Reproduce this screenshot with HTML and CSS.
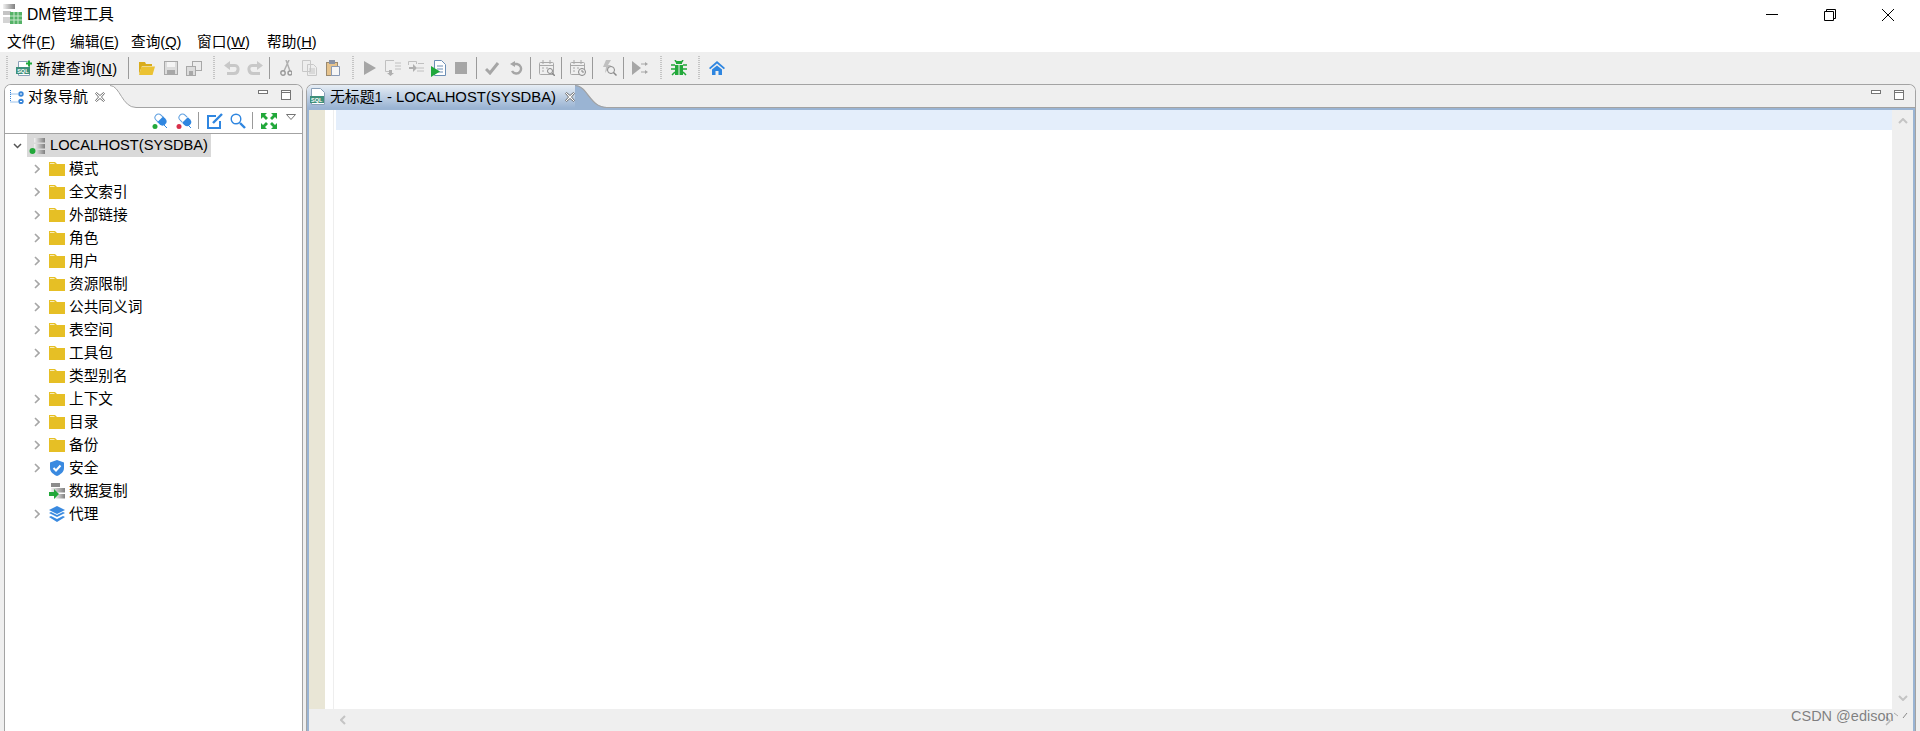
FILE: index.html
```html
<!DOCTYPE html>
<html lang="zh">
<head>
<meta charset="utf-8">
<title>DM管理工具</title>
<link rel="stylesheet" href="styles.css">
</head>
<body>
<svg class="defs" width="0" height="0">
  <defs>
    <linearGradient id="bar"><stop offset="0" stop-color="#f2f2f2"/><stop offset="1" stop-color="#808080"/></linearGradient>
    <symbol id="folder" viewBox="0 0 16 14"><path fill="#e6bf25" d="M0 0h6l2 2h8v12H0z"/><path fill="none" stroke="#f7ecb8" d="M1 1.500h4.500"/></symbol>
    <symbol id="chev" viewBox="0 0 6 10"><path fill="none" stroke="#a6a6a6" stroke-width="1.6" d="M1 1l4 4-4 4"/></symbol>
    <symbol id="grip" viewBox="0 0 2 24"><path stroke="#c4c4c4" stroke-width="2" stroke-dasharray="1 1" d="M1 0v24"/></symbol>
    <symbol id="closex" viewBox="0 0 10 10"><path fill="#fff" stroke="#6e6e6e" d="M1.500.5L5 3.500 8.500.5l1 1L6.500 5l3 3.500-1 1L5 6.500l-3.500 3-1-1L3.500 5 .5 1.500z"/></symbol>
    <symbol id="vmin" viewBox="0 0 10 4"><rect x=".5" y=".5" width="9" height="3" fill="#fff" stroke="#757575"/></symbol>
    <symbol id="vmax" viewBox="0 0 10 10"><rect x=".5" y=".5" width="9" height="9" fill="#fff" stroke="#757575"/><path stroke="#757575" d="M1 2.500h8"/></symbol>
  </defs>
</svg>
<div class="app">
  <header class="titlebar">
    <svg class="appicon" width="19" height="20" viewBox="0 0 19 20"><rect x="0" y="0" width="12" height="5" fill="url(#bar)"/><rect x="0" y="7" width="8" height="4" fill="#c4c4c4"/><rect x="0" y="13" width="7" height="6" fill="#d4d4d4"/><rect x="7" y="8" width="12" height="12" fill="#55b267"/><path stroke="#c8e8cc" d="M7 12h12M7 16h12M11 8v12M15 8v12"/></svg>
    <span class="apptitle">DM管理工具</span>
    <div class="winctl">
      <svg width="14" height="14" viewBox="0 0 14 14"><path stroke="#000" d="M1 6.500h12"/></svg>
      <svg width="14" height="14" viewBox="0 0 14 14"><path fill="none" stroke="#000" d="M1.500 3.500h9v9h-9zM3.500 3.500v-2h9v9h-2"/></svg>
      <svg width="14" height="14" viewBox="0 0 14 14"><path stroke="#000" d="M1 1l12 12M13 1L1 13"/></svg>
    </div>
  </header>
  <nav class="menubar">
    <span class="menu">文件(<u>F</u>)</span><span class="menu">编辑(<u>E</u>)</span><span class="menu">查询(<u>Q</u>)</span><span class="menu">窗口(<u>W</u>)</span><span class="menu">帮助(<u>H</u>)</span>
  </nav>
  <div class="toolbar">
    <svg class="grip" width="2" height="24"><use href="#grip"/></svg>
    <div class="newq">
      <svg width="17" height="16" viewBox="0 0 17 16"><path fill="#fff" stroke="#8aa0b8" d="M2.500 1.500h9l2 2v12h-11z"/><rect x="0" y="7" width="14" height="7" fill="#3e8f7a"/><text x="1.200" y="13" class="sqltxt">SQL</text><path stroke="#1fa83c" stroke-width="2" d="M10 3.500h6M13 .5v6"/></svg>
      <span class="newq-text">新建查询(<u>N</u>)</span>
    </div>
    <i class="sep first"></i>
    <div class="cell"><svg width="16" height="14" viewBox="0 0 16 14"><path fill="#d9ac1c" d="M0 1h6l1 2h6v2H3L0 13z"/><path fill="#ebc233" d="M2.500 5.500H16L13.500 14H0z"/></svg></div>
    <div class="cell"><svg width="14" height="14" viewBox="0 0 14 14"><rect x=".5" y=".5" width="13" height="13" fill="#dcdcdc" stroke="#a8a8a8"/><rect x="3" y="1" width="8" height="5" fill="#f4f4f4"/><rect x="3" y="9" width="8" height="4" fill="#a8a8a8"/></svg></div>
    <div class="cell"><svg width="16" height="15" viewBox="0 0 16 15"><rect x="6.500" y=".5" width="9" height="9" fill="#ececec" stroke="#a8a8a8"/><rect x=".5" y="5.500" width="9" height="9" fill="#dcdcdc" stroke="#a8a8a8"/><rect x="3" y="10" width="4" height="4" fill="#a8a8a8"/></svg></div>
    <svg class="grip g2" width="2" height="24"><use href="#grip"/></svg>
    <div class="cell"><svg width="16" height="14" viewBox="0 0 16 14"><path fill="none" stroke="#c8c8c8" stroke-width="3" d="M4 4.500h7c4.500 0 4 8-1 8H3"/><path fill="#c8c8c8" d="M0 4.500L6 0v9z"/></svg></div>
    <div class="cell"><svg width="16" height="14" viewBox="0 0 16 14"><path fill="none" stroke="#c8c8c8" stroke-width="3" d="M12 4.500H5c-4.500 0-4 8 1 8h7"/><path fill="#c8c8c8" d="M16 4.500L10 0v9z"/></svg></div>
    <i class="sep tight"></i>
    <div class="cell"><svg width="12" height="16" viewBox="0 0 12 16"><path stroke="#b0b0b0" stroke-width="1.500" d="M9 0L4 11M6 0l4 11"/><circle cx="3" cy="13" r="2.200" fill="none" stroke="#999" stroke-width="1.400"/><circle cx="10" cy="13" r="2" fill="none" stroke="#999" stroke-width="1.400"/></svg></div>
    <div class="cell"><svg width="15" height="16" viewBox="0 0 15 16"><path fill="#eee" stroke="#c8c8c8" d="M.5.5h8v11h-8zM5.500 4.500h6l3 3v8h-9z"/><path stroke="#c4c4c4" d="M7 9h6M7 11h6M7 13h6"/></svg></div>
    <div class="cell"><svg width="14" height="16" viewBox="0 0 14 16"><rect x=".5" y="2.500" width="11" height="13" fill="#e6c38d" stroke="#9a8a70"/><rect x="3" y="0" width="6" height="4" fill="#8a93a5"/><path fill="#f6f6f6" stroke="#8a9ab5" d="M5.500 6.500h8v9h-8z"/></svg></div>
    <svg class="grip g2" width="2" height="24"><use href="#grip"/></svg>
    <div class="cell n"><svg width="12" height="14" viewBox="0 0 12 14"><path fill="#a6a6a6" d="M0 0l12 7L0 14z"/></svg></div>
    <div class="cell n"><svg width="16" height="16" viewBox="0 0 16 16"><path fill="none" stroke="#c0c0c0" d="M5 .5H.5v11H5M5 .5h4M10 3h6M10 6h6M10 9h6"/><path fill="#b0b0b0" d="M4 10h3v3h2l-3.500 3L2 13h2z"/></svg></div>
    <div class="cell n"><svg width="16" height="14" viewBox="0 0 16 14"><path fill="none" stroke="#c0c0c0" d="M.5 4V.5h8V3M9 7h7M9 10h7M10 2.500h6"/><path fill="#b0b0b0" d="M1 6h4V3l4 4-4 4V8H1z"/></svg></div>
    <div class="cell n"><svg width="15" height="17" viewBox="0 0 15 17"><path fill="#fff" stroke="#6c8fb5" d="M3.500.5h7l4 4v11h-11z"/><path stroke="#6c8fb5" d="M6 6h6M6 9h6M6 12h6"/><path fill="#1fa83c" d="M0 6l9 5.500L0 17z"/></svg></div>
    <div class="cell n"><svg width="12" height="12" viewBox="0 0 12 12"><rect width="12" height="12" fill="#a6a6a6"/></svg></div>
    <i class="sep wide"></i>
    <div class="cell"><svg width="15" height="13" viewBox="0 0 15 13"><path fill="none" stroke="#a6a6a6" stroke-width="3" d="M1 7l4 4 8-10"/></svg></div>
    <div class="cell"><svg width="14" height="14" viewBox="0 0 14 14"><path fill="none" stroke="#a6a6a6" stroke-width="2.400" d="M4 3h4a4.800 4.800 0 1 1-5 7"/><path fill="#a6a6a6" d="M6 0v6L1 3z"/></svg></div>
    <i class="sep tight"></i>
    <div class="cell"><svg width="16" height="16" viewBox="0 0 16 16"><rect x=".5" y="2.500" width="14" height="12" rx="1" fill="none" stroke="#a8a8a8"/><path stroke="#a8a8a8" d="M1 5.500h13M4 0v4M11 0v4M3 8h2M7 8h2M3 11h2"/><circle cx="11" cy="11" r="2.500" fill="#efefef" stroke="#888"/><path stroke="#888" stroke-width="1.500" d="M13 13l3 3"/></svg></div>
    <i class="sep tight"></i>
    <div class="cell"><svg width="16" height="16" viewBox="0 0 16 16"><rect x=".5" y="2.500" width="14" height="12" rx="1" fill="none" stroke="#a8a8a8"/><path stroke="#a8a8a8" d="M1 5.500h13M4 0v4M11 0v4M3 8h2M7 8h2M3 11h2"/><circle cx="12" cy="12" r="3.500" fill="#efefef" stroke="#888"/><path fill="none" stroke="#888" d="M12 10v2h2"/></svg></div>
    <i class="sep tight"></i>
    <div class="cell"><svg width="16" height="16" viewBox="0 0 16 16"><path fill="#c0c0c0" d="M5 0h5L7 5h3l-6 8 1-6H2z"/><circle cx="10" cy="10" r="3.500" fill="#efefef" stroke="#888"/><path stroke="#888" stroke-width="1.500" d="M12.500 12.500l3 3"/></svg></div>
    <i class="sep tight"></i>
    <div class="cell"><svg width="16" height="14" viewBox="0 0 16 14"><path fill="#a6a6a6" d="M0 0l9 7-9 7z"/><path stroke="#a6a6a6" d="M9 3h5M9 11h5"/><path fill="#a6a6a6" d="M13 1l3 2-3 2zM13 9l3 2-3 2z"/></svg></div>
    <svg class="grip g3" width="2" height="24"><use href="#grip"/></svg>
    <div class="cell"><svg width="16" height="16" viewBox="0 0 16 16"><path fill="#22a83a" d="M5 1h6v3H5zM4 5h8v10H4z"/><path stroke="#22a83a" stroke-width="1.500" d="M4 0l2 3M12 0l-2 3M0 5h4M16 5h-4M0 9h4M16 9h-4M1 15l3-3M15 15l-3-3"/><path stroke="#efefef" d="M8 5v10"/></svg></div>
    <svg class="grip g3" width="2" height="24"><use href="#grip"/></svg>
    <div class="cell"><svg width="16" height="14" viewBox="0 0 16 14"><path fill="#2f86e0" d="M8 0l8 7-1.200 1.200L8 2.500 1.200 8.200 0 7zM3 8.500l5-4 5 4V14H9.500v-4h-3v4H3z"/></svg></div>
  </div>
  <main class="workbench">
    <section class="panel nav">
      <div class="tabrow">
        <div class="tab navtab">
          <svg width="14" height="14" viewBox="0 0 14 14"><path fill="none" stroke="#3a86d8" stroke-dasharray="1 1" d="M.5 0v12h8M.5 4h8"/><circle cx="11" cy="4" r="2.700" fill="#3a86d8"/><circle cx="11" cy="11.500" r="2.700" fill="#3a86d8"/><path stroke="#fff" d="M10 4h2M10 11.500h2"/></svg>
          <span>对象导航</span>
          <svg class="x" width="10" height="10"><use href="#closex"/></svg>
        </div>
        <svg class="curve" width="26" height="23" viewBox="0 0 26 23"><path fill="#fff" d="M0 0c10 0 12 22 26 22v1H0z"/><path fill="none" stroke="#a3a3a3" d="M0 .5c10 0 12 22 26 22"/></svg>
        <div class="tabfill">
          <svg width="10" height="4"><use href="#vmin"/></svg>
          <svg width="10" height="10"><use href="#vmax"/></svg>
        </div>
      </div>
      <div class="navtools">
        <svg width="16" height="16" viewBox="0 0 16 16"><g transform="rotate(-45 9 7)"><path fill="#fff" stroke="#5c9ee0" d="M5.500 6.500V3.500a3.500 3.500 0 0 1 7 0v3"/><path fill="#2f86e0" d="M5 6h8v3a4 4 0 0 1-8 0z"/></g><path stroke="#2f86e0" d="M12 12l3 3"/><circle cx="3" cy="13.500" r="2.500" fill="#22a83a"/></svg>
        <svg width="16" height="16" viewBox="0 0 16 16"><g transform="rotate(-45 9 7)"><path fill="#fff" stroke="#5c9ee0" d="M5.500 6.500V3.500a3.500 3.500 0 0 1 7 0v3"/><path fill="#2f86e0" d="M5 7h8v3a4 4 0 0 1-8 0z"/></g><path stroke="#2f86e0" d="M12 12l3 3"/><circle cx="3" cy="13.500" r="2.500" fill="#d8304a"/></svg>
        <i class="sep navsep"></i>
        <svg width="16" height="16" viewBox="0 0 16 16"><path fill="none" stroke="#2f86e0" stroke-width="2" d="M9 3H1v12h12V8"/><path stroke="#2f86e0" stroke-width="2.400" d="M6 10l9-9"/></svg>
        <svg class="t2" width="16" height="16" viewBox="0 0 16 16"><circle cx="6" cy="6" r="4.800" fill="none" stroke="#2f86e0" stroke-width="1.400"/><path stroke="#2f86e0" stroke-width="2.400" d="M10 10l5 5"/></svg>
        <i class="sep navsep"></i>
        <svg width="16" height="16" viewBox="0 0 16 16"><path fill="#22a83a" d="M0 0h6L4 2l3 3-2 2-3-3-2 2zM16 0v6l-2-2-3 3-2-2 3-3-2-2zM0 16v-6l2 2 3-3 2 2-3 3 2 2zM16 16h-6l2-2-3-3 2-2 3 3 2-2z"/></svg>
        <svg class="viewmenu" width="10" height="6" viewBox="0 0 10 6"><path fill="#fff" stroke="#757575" d="M.5.500h9L5 5.500z"/></svg>
      </div>
      <div class="tree">
        <div class="row root">
          <svg class="chev-root" width="9" height="6" viewBox="0 0 9 6"><path fill="none" stroke="#555" stroke-width="1.500" d="M1 1l3.500 3.500L8 1"/></svg>
          <div class="sel">
            <svg width="16" height="16" viewBox="0 0 16 16"><rect x="5" y="0" width="11" height="4.500" fill="url(#bar)"/><rect x="5" y="6" width="11" height="4.500" fill="url(#bar)"/><rect x="5" y="12" width="11" height="4.500" fill="url(#bar)"/><circle cx="3.500" cy="13" r="3" fill="#22a83a"/></svg>
            <span>LOCALHOST(SYSDBA)</span>
          </div>
        </div>
        <div class="row"><svg class="chev"><use href="#chev"/></svg><svg class="ico"><use href="#folder"/></svg><span>模式</span></div>
        <div class="row"><svg class="chev"><use href="#chev"/></svg><svg class="ico"><use href="#folder"/></svg><span>全文索引</span></div>
        <div class="row"><svg class="chev"><use href="#chev"/></svg><svg class="ico"><use href="#folder"/></svg><span>外部链接</span></div>
        <div class="row"><svg class="chev"><use href="#chev"/></svg><svg class="ico"><use href="#folder"/></svg><span>角色</span></div>
        <div class="row"><svg class="chev"><use href="#chev"/></svg><svg class="ico"><use href="#folder"/></svg><span>用户</span></div>
        <div class="row"><svg class="chev"><use href="#chev"/></svg><svg class="ico"><use href="#folder"/></svg><span>资源限制</span></div>
        <div class="row"><svg class="chev"><use href="#chev"/></svg><svg class="ico"><use href="#folder"/></svg><span>公共同义词</span></div>
        <div class="row"><svg class="chev"><use href="#chev"/></svg><svg class="ico"><use href="#folder"/></svg><span>表空间</span></div>
        <div class="row"><svg class="chev"><use href="#chev"/></svg><svg class="ico"><use href="#folder"/></svg><span>工具包</span></div>
        <div class="row"><span class="chev"></span><svg class="ico"><use href="#folder"/></svg><span>类型别名</span></div>
        <div class="row"><svg class="chev"><use href="#chev"/></svg><svg class="ico"><use href="#folder"/></svg><span>上下文</span></div>
        <div class="row"><svg class="chev"><use href="#chev"/></svg><svg class="ico"><use href="#folder"/></svg><span>目录</span></div>
        <div class="row"><svg class="chev"><use href="#chev"/></svg><svg class="ico"><use href="#folder"/></svg><span>备份</span></div>
        <div class="row"><svg class="chev"><use href="#chev"/></svg><svg class="ico tall" viewBox="0 0 16 16"><path fill="#3a8ae0" d="M8 0l7 2.500V8c0 4-3.500 6.500-7 8-3.500-1.500-7-4-7-8V2.500z"/><path fill="none" stroke="#fff" stroke-width="2" d="M4.500 8l2.500 2.500L11.500 5.500"/></svg><span>安全</span></div>
        <div class="row"><span class="chev"></span><svg class="ico tall" viewBox="0 0 16 16"><rect x="2" y="0" width="9" height="4" fill="#8c8c8c"/><rect x="2" y="5" width="14" height="4.500" fill="url(#bar)"/><rect x="6" y="11" width="10" height="4.500" fill="url(#bar)"/><path fill="#22a83a" d="M0 9h5V6l5 5-5 5v-3H0z"/></svg><span>数据复制</span></div>
        <div class="row"><svg class="chev"><use href="#chev"/></svg><svg class="ico tall" viewBox="0 0 16 16"><path fill="#3a8ae0" d="M8 0l8 4-8 4-8-4zM0 7l2-1 6 3 6-3 2 1-8 4zM0 11l2-1 6 3 6-3 2 1-8 5z"/></svg><span>代理</span></div>
      </div>
    </section>
    <section class="panel editor">
      <div class="tabrow edrow">
        <div class="tab edtab">
          <svg width="15" height="17" viewBox="0 0 15 17"><path fill="#fff" stroke="#8aa0b8" d="M1.500.5h9l4 4v12h-13z"/><rect x="0" y="8" width="14" height="7" fill="#3e8f7a"/><text x="1" y="14" class="sqltxt">SQL</text></svg>
          <span>无标题1 - LOCALHOST(SYSDBA)</span>
          <svg class="x" width="10" height="10"><use href="#closex"/></svg>
        </div>
        <svg class="curve edcurve" width="32" height="23" viewBox="0 0 26 23" preserveAspectRatio="none"><path fill="#9ab4d3" d="M0 0c10 0 12 22 26 22v1H0z"/><path fill="none" stroke="#a3a3a3" d="M0 .5c10 0 12 22 26 22"/></svg>
        <div class="tabfill">
          <svg width="10" height="4"><use href="#vmin"/></svg>
          <svg width="10" height="10"><use href="#vmax"/></svg>
        </div>
      </div>
      <div class="edbody">
        <div class="edmain">
          <div class="gutter"></div>
          <div class="margin"></div>
          <div class="text"><div class="curline"></div></div>
          <div class="vbar">
            <svg width="10" height="6" viewBox="0 0 10 6"><path fill="none" stroke="#c4c4c4" stroke-width="2" d="M1 5l4-4 4 4"/></svg>
            <svg width="10" height="6" viewBox="0 0 10 6"><path fill="none" stroke="#c4c4c4" stroke-width="2" d="M1 1l4 4 4-4"/></svg>
          </div>
        </div>
        <div class="hbar">
          <svg width="6" height="10" viewBox="0 0 6 10"><path fill="none" stroke="#c4c4c4" stroke-width="2" d="M5 1L1 5l4 4"/></svg>
          <svg class="hright" width="24" height="16" viewBox="0 0 24 16"><path fill="none" stroke="#b8b8b8" stroke-width="1.500" d="M1 5l4 4-4 4"/><path fill="none" stroke="#aaa" d="M9 1l4 3"/><path fill="none" stroke="#8a8a8a" d="M22 1l-4 5"/></svg>
        </div>
      </div>
    </section>
  </main>
  <div class="watermark">CSDN @edison</div>
</div>
</body>
</html>
```
FILE: styles.css
```css
* { box-sizing: border-box; }
html, body { margin: 0; height: 100%; }
body { background: #fff; font-family: "Liberation Sans", "Noto Sans CJK SC", sans-serif; font-size: 14.67px; color: #000; overflow: hidden; }
.defs { position: absolute; }
.app { width: 1920px; height: 731px; display: flex; flex-direction: column; position: relative; overflow: hidden; }
u { text-decoration: underline; }
.sqltxt { font: bold 5.5px "Liberation Sans", sans-serif; fill: #fff; }

.titlebar { height: 30px; display: flex; align-items: center; padding: 0 0 4px 3px; flex: none; }
.appicon { margin: 2px 5px 0 0; }
.apptitle { font-size: 15.67px; }
.winctl { margin-left: auto; display: flex; gap: 44px; padding: 4px 25px 0 0; }

.menubar { height: 22px; display: grid; grid-template-columns: 63px 61px 66px 70px auto; align-items: center; padding-left: 7px; flex: none; }
.menu { white-space: nowrap; padding-bottom: 2px; }

.toolbar { height: 32px; background: #efefef; display: flex; align-items: center; padding-left: 6px; flex: none; }
.grip { flex: none; }
.grip.g2 { margin: 0 5px 0 7px; }
.grip.g3 { margin: 0 5px 0 8px; }
.newq { display: flex; align-items: center; gap: 3px; margin-left: 8px; }
.newq-text { white-space: nowrap; letter-spacing: .35px; padding-bottom: 2px; }
.cell { width: 23.5px; display: flex; justify-content: center; align-items: center; height: 24px; flex: none; }
.cell.n { width: 22.75px; }
.sep { display: block; width: 1px; height: 22px; background: #9a9a9a; flex: none; }
.sep.first { margin: 0 6px 0 11px; }
.sep.tight { margin: 0 4.5px 0 2px; }
.sep.wide { margin: 0 4px 0 3.25px; }

.workbench { flex: 1; min-height: 0; display: flex; background: #efefef; padding-left: 4px; gap: 3px; }
.panel { display: flex; flex-direction: column; border: 1px solid #a3a3a3; border-bottom: 0; border-radius: 7px 7px 0 0; background: #fff; overflow: hidden; }
.nav { width: 299px; flex: none; }
.editor { flex: 1; min-width: 0; margin-right: 4px; }

.tabrow { height: 23px; display: flex; flex: none; background: #efefef; }
.tab { display: flex; align-items: center; gap: 4px; padding-left: 5px; white-space: nowrap; flex: none; }
.tab span { font-size: 15px; padding-bottom: 2px; }
.navtab { background: #fff; width: 105px; }
.edtab { width: 268px; background: linear-gradient(#e6edf5, #9ab4d3); padding-left: 3px; gap: 5px; }
.edtab span { font-size: 14.85px; }
.x { margin-left: 3px; flex: none; }
.edtab .x { margin-left: 4px; }
.curve { flex: none; }
.tabfill { flex: 1; display: flex; justify-content: flex-end; align-items: flex-start; gap: 13px; padding: 5px 11px 0 0; border-bottom: 1px solid #a3a3a3; height: 23px; }

.navtools { height: 26px; display: flex; align-items: center; justify-content: flex-end; padding-right: 6px; border-bottom: 1px solid #a3a3a3; flex: none; gap: 8px; }
.navtools .t2 { margin-left: -1px; }
.navsep { height: 17px; margin-left: -2px; }
.viewmenu { align-self: flex-start; margin: 6px 0 0 1px; }

.tree { flex: 1; overflow: hidden; }
.row { height: 23px; display: flex; align-items: center; white-space: nowrap; }
.row > span:last-child, .sel span { padding-bottom: 2px; }
.chev-root { margin: 0 5px 0 8px; flex: none; }
.sel { display: flex; align-items: center; background: #d9d9d9; height: 23px; padding: 0 3px 0 2px; gap: 5px; }
.chev { width: 6px; height: 10px; margin: 0 9px 0 29px; flex: none; }
.ico { width: 16px; height: 14px; margin-right: 4px; flex: none; }
.ico.tall { height: 16px; }

.edbody { flex: 1; min-height: 0; display: flex; flex-direction: column; border: solid #9ab4d3; border-width: 2px 2px 0 2px; }
.edmain { flex: 1; min-height: 0; display: flex; background: #fff; }
.gutter { width: 16px; background: #e9e6d6; flex: none; }
.margin { width: 9px; border-right: 1px solid #eee; flex: none; }
.text { flex: 1; padding-left: 2px; }
.curline { height: 20px; background: #e4eefb; }
.vbar { width: 21px; background: #efefef; display: flex; flex-direction: column; justify-content: space-between; align-items: center; padding: 8px 0; flex: none; }
.hbar { height: 22px; background: #efefef; display: flex; align-items: center; justify-content: space-between; padding: 0 4px 0 31px; flex: none; }

.watermark { position: absolute; left: 1791px; top: 708px; font-size: 14.5px; color: rgba(90, 90, 90, .75); }
```
